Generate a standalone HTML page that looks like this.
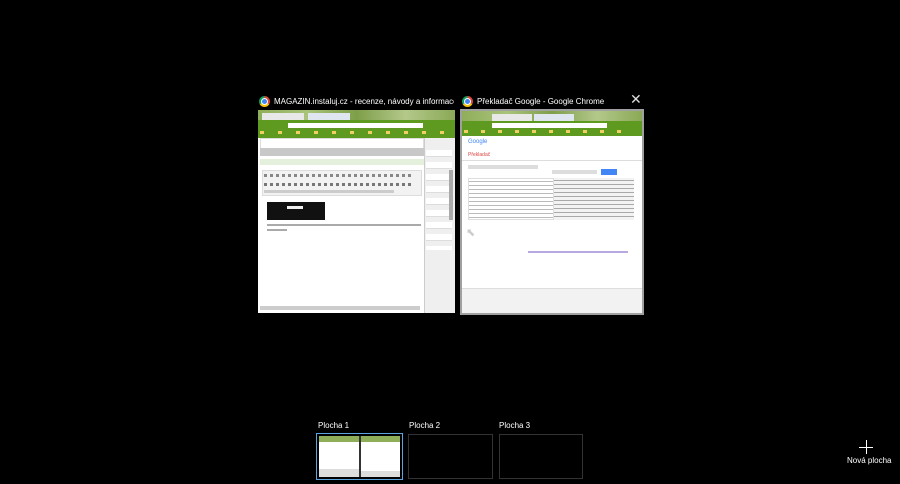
<!DOCTYPE html>
<html><head><style>
*{margin:0;padding:0;box-sizing:border-box}
body{width:900px;height:484px;background:#000;font-family:"Liberation Sans",sans-serif;color:#fff;position:relative;overflow:hidden}
.a{position:absolute}
.t{font-size:8px;color:#fff;white-space:nowrap}
.ic{width:11px;height:11px;border-radius:50%;background:conic-gradient(#db4437 0 120deg,#f4c20d 120deg 240deg,#0f9d58 240deg 360deg)}
.ic::after{content:"";position:absolute;left:3px;top:3px;width:5px;height:5px;border-radius:50%;background:#4285f4;box-shadow:0 0 0 1px #fff}
.grass{background:linear-gradient(90deg,#8fae5a,#a9c37a,#7e9f4a,#b3c88a,#8aa956)}
.g{background:#5e9a1f}
.line{height:2px;background:#ccc}
</style></head><body>
<div class="a ic" style="left:259px;top:96px"></div>
<div class="a t" style="left:274px;top:97px;width:180px;overflow:hidden">MAGAZIN.instaluj.cz - recenze, návody a informace z...</div>
<div class="a" style="left:258px;top:110px;width:197px;height:203px;background:#fff;overflow:hidden">
 <div class="a grass" style="left:0;top:0;width:197px;height:10px"></div>
 <div class="a" style="left:4px;top:3px;width:42px;height:7px;background:#e8e8e8"></div>
 <div class="a" style="left:50px;top:3px;width:42px;height:7px;background:#dfe6f0"></div>
 <div class="a g" style="left:0;top:10px;width:197px;height:18px"></div>
 <div class="a" style="left:30px;top:13px;width:135px;height:5px;background:#fff"></div>
 <div class="a" style="left:2px;top:21px;width:190px;height:3px;background:repeating-linear-gradient(90deg,#f0d060 0 4px,transparent 4px 18px)"></div>
 <div class="a" style="left:2px;top:28px;width:164px;height:16px;background:#fff;border:1px solid #ddd"></div>
 <div class="a" style="left:2px;top:38px;width:164px;height:8px;background:#c8c8c8"></div>
 <div class="a" style="left:2px;top:49px;width:164px;height:6px;background:#e4f0dc"></div>
 <div class="a" style="left:4px;top:60px;width:160px;height:26px;background:#f2f2f2;border:1px solid #ddd"></div>
 <div class="a" style="left:6px;top:64px;width:150px;height:3px;background:repeating-linear-gradient(90deg,#888 0 3px,transparent 3px 6px)"></div>
 <div class="a" style="left:6px;top:73px;width:150px;height:3px;background:repeating-linear-gradient(90deg,#777 0 3px,transparent 3px 6px)"></div>
 <div class="a" style="left:6px;top:80px;width:130px;height:3px;background:#ccc"></div>
 <div class="a" style="left:9px;top:92px;width:58px;height:18px;background:#111"></div>
 <div class="a" style="left:29px;top:96px;width:16px;height:3px;background:#eee"></div>
 <div class="a line" style="left:9px;top:114px;width:154px;height:2px;background:#aaa"></div>
 <div class="a" style="left:9px;top:119px;width:20px;height:2px;background:#aaa"></div>
 <div class="a" style="left:166px;top:28px;width:31px;height:175px;background:#efefef;border-left:1px solid #ccc"></div>
 <div class="a" style="left:168px;top:40px;width:26px;height:100px;background:repeating-linear-gradient(180deg,#fff 0 6px,#ddd 6px 7px,#efefef 7px 12px)"></div>
 <div class="a" style="left:191px;top:60px;width:4px;height:50px;background:#aaa"></div>
 <div class="a" style="left:2px;top:196px;width:160px;height:4px;background:#ccc"></div>
</div>
<div class="a ic" style="left:462px;top:96px"></div>
<div class="a t" style="left:477px;top:97px">Překladač Google - Google Chrome</div>
<div class="a" style="left:630px;top:91px;font-size:14px;color:#ddd">✕</div>
<div class="a" style="left:460px;top:109px;width:184px;height:206px;border:2px solid #a0a0a0"></div>
<div class="a" style="left:462px;top:111px;width:180px;height:202px;background:#fff;overflow:hidden">
 <div class="a grass" style="left:0;top:0;width:180px;height:10px"></div>
 <div class="a" style="left:30px;top:3px;width:40px;height:7px;background:#e8e8e8"></div>
 <div class="a" style="left:72px;top:3px;width:40px;height:7px;background:#dfe6f0"></div>
 <div class="a g" style="left:0;top:10px;width:180px;height:15px"></div>
 <div class="a" style="left:30px;top:12px;width:115px;height:5px;background:#fff"></div>
 <div class="a" style="left:2px;top:19px;width:170px;height:3px;background:repeating-linear-gradient(90deg,#f0d060 0 4px,transparent 4px 17px)"></div>
 <div class="a" style="left:6px;top:28px;font-size:6px;color:#4285f4">Google</div>
 <div class="a" style="left:6px;top:41px;font-size:5px;color:#d44">Překladač</div>
 <div class="a" style="left:0;top:49px;width:180px;height:1px;background:#ddd"></div>
 <div class="a" style="left:6px;top:54px;width:70px;height:4px;background:#ddd"></div>
 <div class="a" style="left:90px;top:59px;width:45px;height:4px;background:#ddd"></div>
 <div class="a" style="left:139px;top:58px;width:16px;height:6px;background:#4285f4"></div>
 <div class="a" style="left:6px;top:67px;width:86px;height:42px;border:1px solid #ddd;background:repeating-linear-gradient(180deg,#fff 0 2px,#bbb 2px 3px,#fff 3px 4px)"></div>
 <div class="a" style="left:92px;top:67px;width:80px;height:42px;background:#f3f3f3 repeating-linear-gradient(180deg,#f3f3f3 0 2px,#aaa 2px 3px,#f3f3f3 3px 4px)"></div>
 <div class="a" style="left:66px;top:140px;width:100px;height:2px;background:#b8a8e0"></div>
 <div class="a" style="left:0;top:177px;width:180px;height:25px;background:#f2f2f2;border-top:1px solid #ddd"></div>
</div>
<div class="a" style="left:466px;top:226px;font-size:11px;color:#ccc">⬉</div>
<div class="a t" style="left:318px;top:421px">Plocha 1</div>
<div class="a t" style="left:409px;top:421px">Plocha 2</div>
<div class="a t" style="left:499px;top:421px">Plocha 3</div>
<div class="a" style="left:316px;top:433px;width:87px;height:47px;border:1px solid #5ba4e0;padding:2px">
 <div style="display:flex;width:100%;height:100%;background:#fff">
  <div style="flex:1;background:linear-gradient(#8fae5a 0 15%,#fff 15% 80%,#ddd 80%)"></div>
  <div style="width:2px;background:#333"></div>
  <div style="flex:1;background:linear-gradient(#8fae5a 0 15%,#fff 15% 85%,#ddd 85%)"></div>
 </div>
</div>
<div class="a" style="left:408px;top:434px;width:85px;height:45px;border:1px solid #333"></div>
<div class="a" style="left:499px;top:434px;width:84px;height:45px;border:1px solid #333"></div>
<div class="a" style="left:859px;top:447px;width:14px;height:1px;background:#fff"></div>
<div class="a" style="left:866px;top:440px;width:1px;height:14px;background:#fff"></div>
<div class="a t" style="left:847px;top:456px">Nová plocha</div>
</body></html>
